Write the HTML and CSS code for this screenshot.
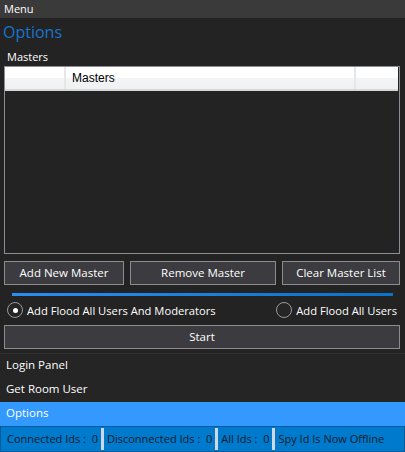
FILE: index.html
```html
<!DOCTYPE html>
<html>
<head>
<meta charset="utf-8">
<link rel="stylesheet" href="styles.css">
</head>
<body>
<div class="app">
  <div class="menubar">Menu</div>
  <div class="title">Options</div>
  <div class="section">Masters</div>
  <div class="grid">
    <div class="grid-head">
      <div class="col c0"></div>
      <div class="col c1">Masters</div>
      <div class="col c2"></div>
    </div>
  </div>
  <div class="buttons">
    <div class="btn b1">Add New Master</div>
    <div class="btn b2">Remove Master</div>
    <div class="btn b3">Clear Master List</div>
  </div>
  <div class="progress"></div>
  <div class="radios">
    <div class="radio"><span class="dot checked"></span>Add Flood All Users And Moderators</div>
    <div class="radio"><span class="dot"></span>Add Flood All Users</div>
  </div>
  <div class="btn start">Start</div>
  <div class="nav">
    <div class="nav-item">Login Panel</div>
    <div class="nav-item">Get Room User</div>
    <div class="nav-item active">Options</div>
  </div>
  <div class="status">
    <span class="st">Connected Ids :&nbsp; 0</span>
    <span class="st">Disconnected Ids :&nbsp; 0</span>
    <span class="st">All Ids :&nbsp; 0</span>
    <span class="st last">Spy Id Is Now Offline</span>
  </div>
</div>
</body>
</html>
```
FILE: styles.css
```css
* { box-sizing: border-box; }
html, body { margin: 0; padding: 0; }
body {
  width: 405px;
  height: 452px;
  background: #232323;
  font-family: "Open Sans", "Noto Sans", sans-serif;
  font-size: 11px;
  color: #f0f0f0;
  overflow: hidden;
}
.app { display: flex; flex-direction: column; height: 452px; }
.menubar {
  height: 18px;
  background: #3a3a3a;
  padding-left: 4px;
  line-height: 18px;
  color: #fff;
}
.title {
  height: 28px;
  padding-left: 3px;
  font-size: 16px;
  line-height: 28px;
  color: #1a74cc;
}
.section {
  height: 20px;
  padding-left: 7px;
  line-height: 22px;
  color: #fff;
}
.grid {
  margin: 0 5px 0 4px;
  height: 188px;
  border: 1px solid #8a8d93;
  background: #232323;
}
.grid-head {
  display: flex;
  height: 24px;
  background: linear-gradient(#ffffff 0, #ffffff 50%, #f3f4f6 50%, #f0f1f3 100%);
  border-bottom: 2px solid #d8d8d8;
  margin-right: 1px;
}
.col {
  font-family: "Liberation Sans", Arial, sans-serif;
  font-size: 12px;
  color: #000;
  line-height: 23px;
  border-right: 2px solid #e6e7e9;
}
.c0 { width: 61px; }
.c1 { width: 290px; padding-left: 6px; }
.c2 { flex: 1; border-right: 0; }
.buttons {
  display: flex;
  gap: 6px;
  margin: 7px 5px 0 4px;
}
.btn {
  height: 24px;
  border: 1px solid #8c8c8c;
  background: #3c3c40;
  color: #fff;
  text-align: center;
  line-height: 21px;
  font-size: 11.5px;
}
.b1 { width: 120px; }
.b2 { width: 146px; }
.b3 { flex: 1; }
.progress {
  height: 3px;
  margin: 8px 12px 0 12px;
  background: linear-gradient(90deg, #2a8ef0, #0a72c8);
}
.radios {
  display: flex;
  justify-content: space-between;
  margin: 3px 8px 0 7px;
  height: 22px;
  align-items: center;
  font-size: 11.2px;
}
.radio { display: flex; align-items: center; gap: 4px; color: #fff; }
.dot {
  width: 16px;
  height: 16px;
  border: 1px solid #9a9a9a;
  border-radius: 50%;
  background: #252525;
  display: flex;
  align-items: center;
  justify-content: center;
}
.dot.checked::after {
  content: "";
  width: 5px;
  height: 5px;
  border-radius: 50%;
  background: #fff;
}
.start { margin: 4px 5px 0 4px; line-height: 22px; }
.nav {
  margin-top: 4px;
  border-top: 1px solid #333;
  display: flex;
  flex-direction: column;
}
.nav-item {
  height: 24px;
  line-height: 22px;
  padding-left: 6px;
  color: #fff;
  background: #252525;
  font-size: 11.5px;
}
.nav-item.active { background: #3399ff; }
.status {
  flex: 1;
  background: #007acc;
  border: 1px solid #005b9a;
  display: flex;
  align-items: center;
  padding-left: 6px;
  color: #0a1a2a;
  white-space: nowrap;
  font-size: 11px;
}
.st {
  padding-right: 3px;
  margin-right: 3px;
  border-right: 3px solid #cfd8e0;
  line-height: 22px;
  height: 22px;
}
.st.last { border-right: 0; }
```
